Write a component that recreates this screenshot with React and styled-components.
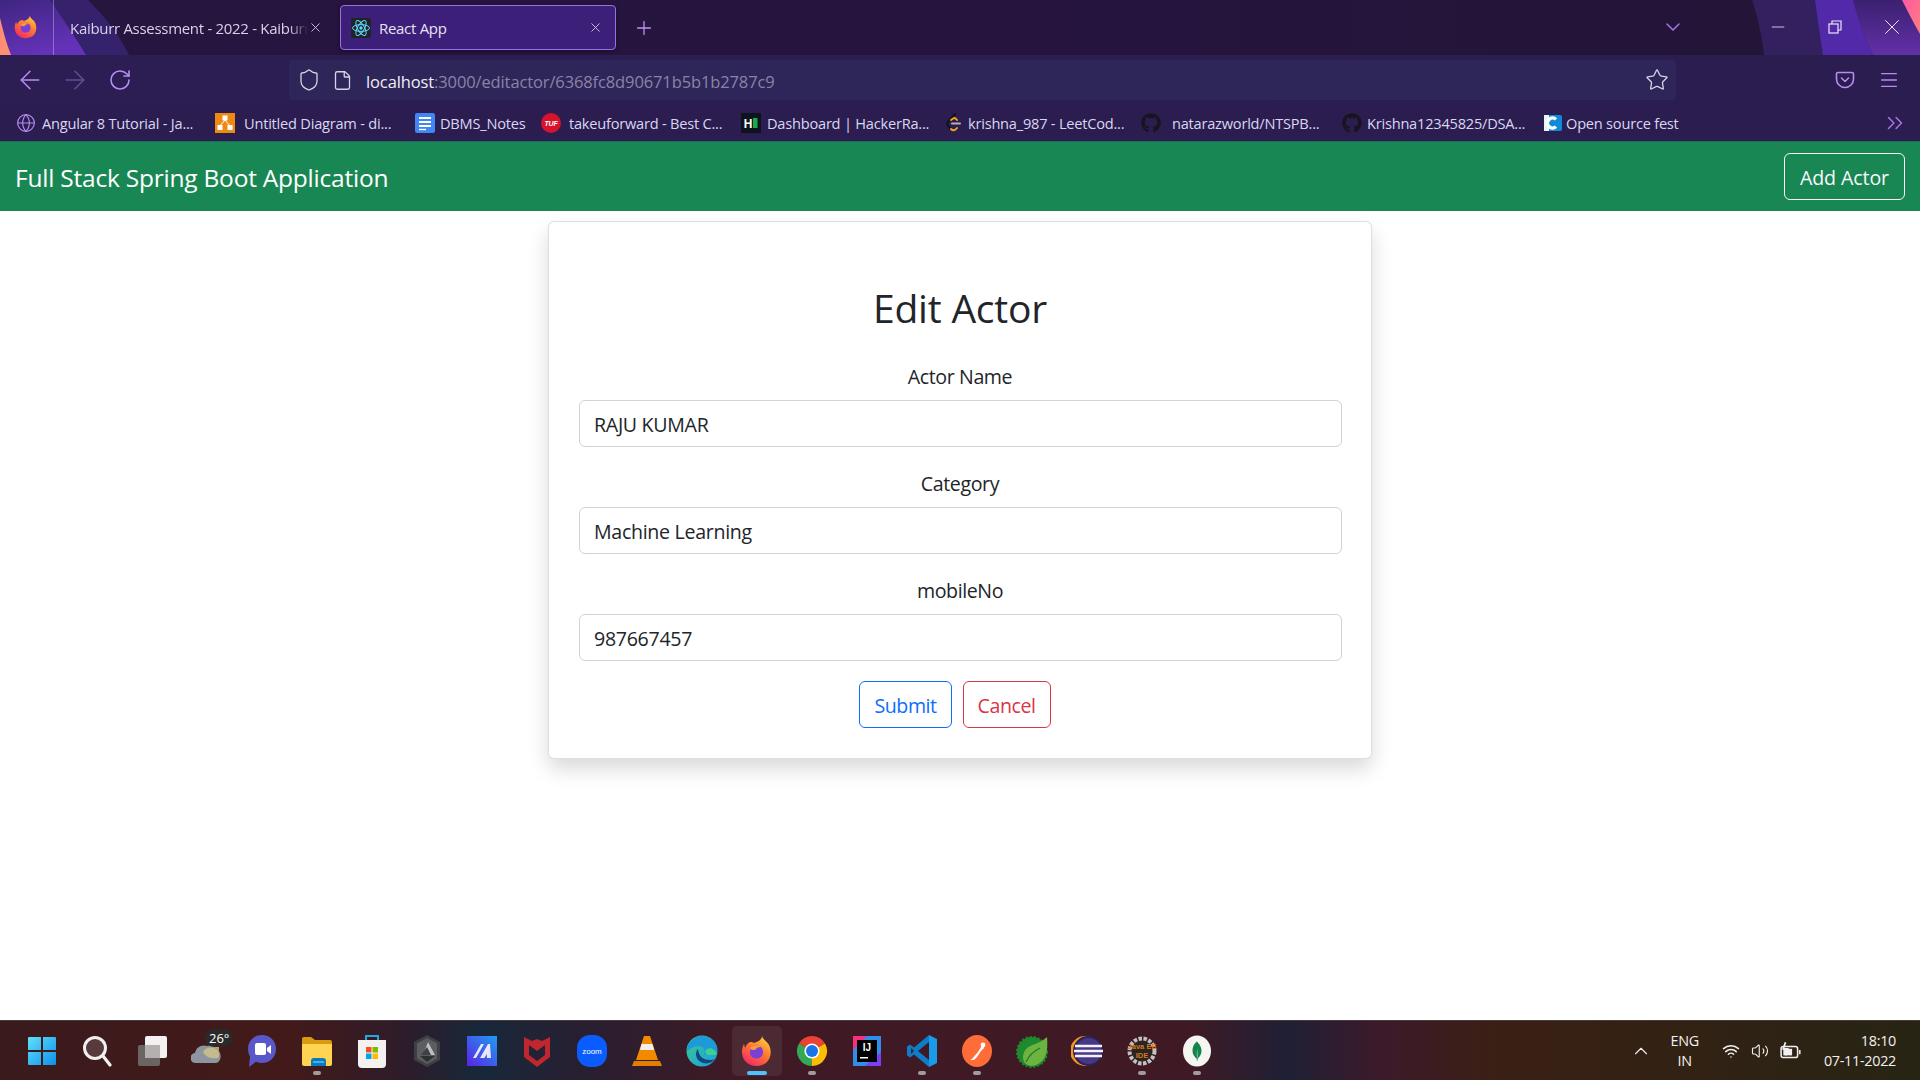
import React from 'react';
import styled, { createGlobalStyle } from 'styled-components';
import {
  ArrowLeft, ArrowRight, RotateCw, Shield, File, Star, ChevronDown, ChevronUp,
  Minus, X, Plus, Menu, ChevronsRight, Globe, Volume2, Wifi,
} from 'lucide-react';
import { FaGithub } from 'react-icons/fa';
import { SiMongodb } from 'react-icons/si';

const UI_FONT = '"Open Sans", "Noto Sans", "Liberation Sans", sans-serif';

const GlobalStyle = createGlobalStyle`
  html, body { margin: 0; padding: 0; height: 100%; background: #fff; }
  body { font-family: ${UI_FONT}; overflow: hidden; }
  #root { height: 100%; }
  * { box-sizing: border-box; }
`;

const Page = styled.div`
  display: flex;
  flex-direction: column;
  height: 1080px;
`;

const TabStrip = styled.div`
  position: relative;
  display: flex;
  align-items: center;
  height: 55px;
  background: linear-gradient(90deg, #25153f 0%, #26143f 50%, #221538 90%);
  color: #e8e2f4;
`;

const Swoop = styled.svg`
  position: absolute;
  left: 0;
  top: 0;
  width: 100%;
  height: 100%;
`;

const BrowserLogo = styled.div`
  position: relative;
  display: flex;
  align-items: center;
  justify-content: center;
  width: 54px;
  height: 55px;
  padding: 0 2px 2px 0;
  border-right: 1px solid rgba(255, 255, 255, 0.3);
`;

const Tab = styled.div`
  position: relative;
  display: flex;
  align-items: center;
  height: 45px;
  font-size: 15px;
  letter-spacing: -0.3px;
  white-space: nowrap;
  ${(p) => p.$active
    ? `width: 276px; margin-left: 10px; padding: 0 12px 0 10px; background: #3b1f78;
       border: 1px solid #9d6fe6; border-radius: 4px; box-shadow: 0 1px 4px rgba(0,0,0,.4);`
    : 'width: 276px; padding: 0 7px 0 16px; color: #d9d2e8;'}
`;

const TabTitle = styled.span`
  flex: 1;
  min-width: 0;
  margin-left: ${(p) => p.$offset || 0}px;
  overflow: hidden;
  ${(p) => p.$fade && 'mask-image: linear-gradient(90deg, #000 92%, transparent);'}
`;

const TabClose = styled.span`
  display: flex;
  color: #d5cfe2;
`;

const NewTab = styled.div`
  position: relative;
  display: flex;
  margin-left: 17px;
  color: #bd93f5;
`;

const TabListButton = styled.div`
  position: relative;
  display: flex;
  margin: 0 64px 2px auto;
  color: #a874e8;
`;

const WindowButton = styled.div`
  position: relative;
  display: flex;
  align-items: center;
  justify-content: center;
  width: 57px;
  height: 55px;
  padding-bottom: 1px;
  color: #ece8f4;
`;

const RestoreIcon = styled.svg`
  width: 14px;
  height: 14px;
`;

const NavBar = styled.div`
  display: flex;
  align-items: center;
  height: 49px;
  padding: 5px 0 4px 7px;
  background: linear-gradient(90deg, #2c1e53 0%, #2b1d4f 100%);
  color: #b98cf2;
`;

const NavButton = styled.div`
  display: flex;
  align-items: center;
  justify-content: center;
  width: 45px;
  opacity: ${(p) => (p.$dim ? 0.42 : 1)};
`;

const UrlBar = styled.div`
  display: flex;
  align-items: center;
  width: 1387px;
  height: 40px;
  margin-left: 147px;
  padding: 0 7px 0 8px;
  background: #2e2659;
  border-radius: 4px;
  color: #d8d2e6;
`;

const UrlIcon = styled.span`
  display: flex;
  margin-right: ${(p) => p.$gap}px;
`;

const UrlHost = styled.span`
  padding-top: 2px;
  font-size: 16.5px;
  letter-spacing: -0.12px;
  color: #f1edf7;
`;

const UrlPath = styled(UrlHost)`
  color: #8b83a7;
`;

const UrlStar = styled.span`
  display: flex;
  margin-left: auto;
`;

const NavRight = styled.div`
  display: flex;
  align-items: center;
  gap: 23px;
  margin-left: 159px;
`;

const BookmarkBar = styled.div`
  display: flex;
  align-items: center;
  height: 37px;
  padding-left: 16px;
  background: #2b1d4f;
  color: #d9d6f2;
  font-size: 14.6px;
  letter-spacing: -0.22px;
  white-space: nowrap;
`;

const Bookmark = styled.div`
  display: flex;
  align-items: center;
  flex: none;
  width: ${(p) => p.$width}px;
`;

const BookmarkIcon = styled.span`
  display: flex;
  align-items: center;
  justify-content: center;
  width: 20px;
  height: 20px;
  margin-right: ${(p) => p.$gap}px;
`;

const OverflowButton = styled.div`
  display: flex;
  margin-left: auto;
  margin-right: 12px;
  color: #a874e8;
`;

const AppBar = styled.header`
  display: flex;
  align-items: center;
  justify-content: space-between;
  height: 70px;
  padding: 0 15px;
  background: #198754;
  border-top: 1px solid #1a6e60;
`;

const Brand = styled.div`
  padding-top: 2px;
  color: #fff;
  font-size: 24.5px;
  letter-spacing: -0.22px;
`;

const OutlineButton = styled.button`
  height: 47px;
  padding: 2px 15px 0;
  background: transparent;
  border: 1px solid ${(p) => p.$color};
  border-radius: 6px;
  color: ${(p) => p.$color};
  font-family: ${UI_FONT};
  font-size: 19.6px;
  letter-spacing: -0.1px;
`;

const FormButton = styled(OutlineButton)`
  padding: 2px 14px 0;
  letter-spacing: -0.45px;
`;

const Main = styled.main`
  flex: 1;
  display: flex;
  justify-content: center;
  padding-top: 10px;
  background: #fff;
`;

const Card = styled.div`
  width: 824px;
  height: 538px;
  padding: 56px 30px 0;
  background: #fff;
  border: 1px solid rgba(0, 0, 0, 0.125);
  border-radius: 6px;
  box-shadow: 0 10px 20px rgba(0, 0, 0, 0.15);
`;

const Heading = styled.h2`
  margin: 0 0 24px;
  color: #212529;
  font-size: 39px;
  font-weight: 400;
  line-height: 59px;
  letter-spacing: -0.2px;
  text-align: center;
`;

const Field = styled.div`
  margin-bottom: 21px;
`;

const Label = styled.label`
  display: block;
  margin-bottom: 8px;
  color: #212529;
  font-size: 19.6px;
  line-height: 31px;
  letter-spacing: -0.4px;
  text-align: center;
`;

const Input = styled.input`
  display: block;
  width: 763px;
  height: 47px;
  padding: 2px 14px 0;
  background: #fff;
  border: 1px solid #ced4da;
  border-radius: 6px;
  color: #212529;
  font-family: ${UI_FONT};
  font-size: 19.6px;
  letter-spacing: -0.3px;
  outline: none;
`;

const Actions = styled.div`
  display: flex;
  justify-content: center;
  gap: 11px;
  margin-top: -1px;
  padding-right: 10px;
`;

const Taskbar = styled.footer`
  display: flex;
  align-items: center;
  height: 60px;
  padding-left: 14px;
  border-top: 1px solid #4a3a40;
  background: linear-gradient(90deg, #3a1a1d 0%, #431a19 15%, #2e1c2a 21%, #17283a 25%, #2a1e30 31%,
    #3f1a25 38%, #3f1a25 62%, #1f2035 67%, #3d1a2a 72%, #3a2014 78%, #272414 100%);
`;

const TaskItem = styled.div`
  position: relative;
  display: flex;
  align-items: center;
  justify-content: center;
  flex: none;
  width: 55px;
  height: 59px;
  &::before {
    content: '';
    display: ${(p) => (p.$active ? 'block' : 'none')};
    position: absolute;
    left: 3px;
    top: 5px;
    width: 50px;
    height: 50px;
    border-radius: 5px;
    background: rgba(255, 255, 255, 0.07);
  }
  &::after {
    content: '';
    display: ${(p) => (p.$active || p.$open ? 'block' : 'none')};
    position: absolute;
    bottom: 5px;
    left: 50%;
    transform: translateX(-50%);
    width: ${(p) => (p.$active ? 20 : 8)}px;
    height: 4px;
    border-radius: 2px;
    background: ${(p) => (p.$active ? '#4cc2ff' : '#a39a9c')};
  }
  & > svg { position: relative; }
`;

const WeatherBadge = styled.span`
  position: absolute;
  left: 26px;
  top: 8px;
  padding: 0 4px;
  border-radius: 9px;
  background: #2a2a2a;
  color: #fff;
  font-size: 13px;
  line-height: 18px;
`;

const Tray = styled.div`
  display: flex;
  align-items: center;
  margin-left: auto;
  padding-right: 24px;
  color: #f2f0ee;
  font-size: 14.4px;
  letter-spacing: -0.3px;
`;

const TrayLang = styled.div`
  margin: 0 23px 0 19px;
  line-height: 20px;
  text-align: center;
`;

const TrayIcons = styled.div`
  display: flex;
  align-items: center;
  gap: 11px;
`;

const Clock = styled.div`
  margin-left: 22px;
  line-height: 20px;
  text-align: right;
`;

const FirefoxIcon = ({ size = 30 }) => (
  <svg width={size} height={size} viewBox="0 0 32 32">
    <defs>
      <linearGradient id={`ff${size}`} x1="0.8" y1="0" x2="0.2" y2="1">
        <stop offset="0" stopColor="#ffd23f" />
        <stop offset="0.45" stopColor="#ff7a2f" />
        <stop offset="1" stopColor="#f0246a" />
      </linearGradient>
    </defs>
    <path d="M21 1c1 4 5 5 7 9 3 6 2 14-3 18-6 4-15 4-20-1C0 22 0 14 3 9l1 4c1-3 3-5 5-6 2 0 3 0 4 1 3-1 8-3 8-7z" fill={`url(#ff${size})`} />
    <circle cx="15.5" cy="17" r="6.6" fill="#7a3fd6" />
    <path d="M9 13c3-3 8-3 11-1-3 0-5 1-6 3-2 0-4 0-5-2z" fill="#ff9a3a" />
  </svg>
);

const ReactIcon = () => (
  <svg width="20" height="20" viewBox="0 0 20 20">
    <rect width="20" height="20" rx="2" fill="#20232a" />
    <g fill="none" stroke="#61dafb" strokeWidth="1">
      <ellipse cx="10" cy="10" rx="8.5" ry="3.4" />
      <ellipse cx="10" cy="10" rx="8.5" ry="3.4" transform="rotate(60 10 10)" />
      <ellipse cx="10" cy="10" rx="8.5" ry="3.4" transform="rotate(120 10 10)" />
    </g>
    <circle cx="10" cy="10" r="1.7" fill="#61dafb" />
  </svg>
);

const PocketIcon = () => (
  <svg width="20" height="20" viewBox="0 0 20 20" fill="none" stroke="currentColor" strokeWidth="1.6" strokeLinecap="round" strokeLinejoin="round">
    <path d="M3 2.5h14a1.5 1.5 0 0 1 1.5 1.5v5a8.5 8.5 0 0 1-17 0V4A1.5 1.5 0 0 1 3 2.5z" />
    <path d="M6.5 8l3.5 3.5L13.500 8" />
  </svg>
);

const DrawioIcon = () => (
  <svg width="20" height="20" viewBox="0 0 20 20">
    <rect width="20" height="20" fill="#ee8a12" />
    <path d="M10 7l-5 6M10 7l5 6" stroke="#fff" strokeWidth="1" />
    <rect x="7.5" y="2.5" width="5" height="5" fill="#fff" />
    <rect x="2.5" y="12" width="5" height="5" fill="#fff" />
    <rect x="12.5" y="12" width="5" height="5" fill="#fff" />
  </svg>
);

const DocsIcon = () => (
  <svg width="20" height="20" viewBox="0 0 20 20">
    <rect width="20" height="20" rx="2" fill="#4285f4" />
    <path d="M4 5h12M4 9h12M4 13h12" stroke="#fff" strokeWidth="2" />
    <path d="M4 16.5h7" stroke="#fff" strokeWidth="1.4" />
  </svg>
);

const TufIcon = () => (
  <svg width="20" height="20" viewBox="0 0 20 20">
    <circle cx="10" cy="10" r="10" fill="#d7132c" />
    <text x="10" y="12.5" textAnchor="middle" fontSize="7" fontWeight="800" fontStyle="italic" fill="#fff" fontFamily="Liberation Sans">TUF</text>
  </svg>
);

const HackerRankIcon = () => (
  <svg width="20" height="20" viewBox="0 0 20 20">
    <rect width="20" height="20" fill="#0e141e" />
    <text x="7" y="14.5" textAnchor="middle" fontSize="12" fontWeight="700" fill="#fff" fontFamily="Liberation Sans">H</text>
    <rect x="12" y="5" width="4.5" height="10" fill="#1ba94c" />
  </svg>
);

const LeetCodeIcon = () => (
  <svg width="20" height="20" viewBox="0 0 20 20" fill="none" strokeWidth="2" strokeLinecap="round">
    <path d="M12 1L5 9Q3.500 11 5 13L8 16" stroke="#14101c" />
    <path d="M8 7L11 5Q12 4.500 14 7" stroke="#f0a41c" />
    <path d="M8 16Q11 19 14 15" stroke="#f0a41c" />
    <path d="M9 10.500H17" stroke="#b3b1b8" />
  </svg>
);

const FestIcon = () => (
  <svg width="18" height="16" viewBox="0 0 18 16">
    <rect width="18" height="16" rx="2" fill="#0d8bd9" />
    <path d="M12 4.4A5 5 0 1 0 12 11.6" fill="none" stroke="#fff" strokeWidth="3.4" />
    <rect x="0" y="0" width="5" height="16" fill="#fff" opacity="0.9" />
  </svg>
);

const WindowsIcon = () => (
  <svg width="30" height="30" viewBox="0 0 30 30">
    <defs>
      <linearGradient id="win" x1="0" y1="0" x2="1" y2="1">
        <stop offset="0" stopColor="#5fe0fb" />
        <stop offset="1" stopColor="#0f8fe8" />
      </linearGradient>
    </defs>
    <path d="M1 2a1 1 0 0 1 1-1h12v13H1zM16 1h12a1 1 0 0 1 1 1v12H16zM1 16h13v13H2a1 1 0 0 1-1-1zM16 16h13v12a1 1 0 0 1-1 1H16z" fill="url(#win)" />
  </svg>
);

const SearchIcon = () => (
  <svg width="30" height="32" viewBox="0 0 30 32">
    <circle cx="13" cy="13" r="10.500" fill="rgba(255,255,255,.14)" stroke="#f2efef" strokeWidth="3" />
    <path d="M21 21l7 9" stroke="#f2efef" strokeWidth="3.200" strokeLinecap="round" />
  </svg>
);

const TaskViewIcon = () => (
  <svg width="30" height="32" viewBox="0 0 30 32">
    <rect x="1" y="10" width="22" height="21" rx="2" fill="#6a6463" />
    <rect x="8" y="1" width="22" height="22" rx="2" fill="#f3f1f1" />
    <rect x="8" y="10" width="15" height="13" fill="#b5b0af" />
  </svg>
);

const WeatherIcon = () => (
  <svg width="32" height="32" viewBox="0 0 32 32">
    <rect x="20" y="10" width="8" height="8" fill="#e9a22c" />
    <path d="M5 28a5 5 0 0 1-1-10c1-6 7-9 12-7 4-1 11 1 13 7 2 5-1 10-4 10z" fill="#8d96a0" />
    <path d="M12 17c2-4 8-6 13-3 3 2 4 6 2 9-5 1-12 0-15-6z" fill="#c4bb8c" />
  </svg>
);

const MeetIcon = () => (
  <svg width="30" height="34" viewBox="0 0 30 34">
    <path d="M15 1c8 0 14 6 14 14s-6 14-14 14c-2 0-4-.5-6-1.300L2 33l1-10C2 21 1 18 1 15 1 7 7 1 15 1z" fill="#5a57c8" />
    <rect x="8" y="9" width="11" height="12" rx="2" fill="#fff" />
    <path d="M20 14l4-3v9l-4-3z" fill="#fff" />
  </svg>
);

const FolderIcon = () => (
  <svg width="32" height="32" viewBox="0 0 32 32">
    <path d="M1 4a2 2 0 0 1 2-2h7l4 3h15a2 2 0 0 1 2 2v3H1z" fill="#d99a10" />
    <path d="M1 9h30v20a2 2 0 0 1-2 2H3a2 2 0 0 1-2-2z" fill="#ffd453" />
    <path d="M10 31v-5a3 3 0 0 1 3-3h9a3 3 0 0 1 3 3v5z" fill="#1276bd" />
    <rect x="12" y="26" width="11" height="2" fill="#38b6f1" />
  </svg>
);

const StoreIcon = () => (
  <svg width="30" height="34" viewBox="0 0 30 34">
    <path d="M9 6V2h12v4" fill="none" stroke="#22a7e0" strokeWidth="2" />
    <path d="M1 6h28v24a4 4 0 0 1-4 4H5a4 4 0 0 1-4-4z" fill="#f4f2f0" />
    <rect x="9" y="13" width="5.5" height="5.5" fill="#f25022" />
    <rect x="15.5" y="13" width="5.5" height="5.5" fill="#7fba00" />
    <rect x="9" y="19.5" width="5.5" height="5.5" fill="#00a4ef" />
    <rect x="15.5" y="19.5" width="5.5" height="5.5" fill="#ffb900" />
  </svg>
);

const HexIcon = () => (
  <svg width="28" height="32" viewBox="0 0 28 32">
    <path d="M14 0l13 7v18l-13 7-13-7V7z" fill="#3f4044" />
    <path d="M14 3l10 5.500v15L14 29 4 23.500v-15z" fill="#5c5d61" />
    <path d="M15 7l7 13H10z" fill="#bfc0c3" />
    <path d="M14 12l4 8H8z" fill="#3f4044" />
    <path d="M7 21h15l-8 6z" fill="#2f3033" />
  </svg>
);

const MongoLabIcon = () => (
  <svg width="30" height="30" viewBox="0 0 30 30">
    <defs>
      <linearGradient id="ml" x1="0" y1="1" x2="1" y2="0">
        <stop offset="0" stopColor="#5a22e6" />
        <stop offset="1" stopColor="#1f9df0" />
      </linearGradient>
    </defs>
    <rect width="30" height="30" fill="url(#ml)" />
    <path d="M6 22L14 8h3L9 22zM13 22l8-14h2l1 14h-4l-.3-4-2.200 4z" fill="#e6e8fb" />
  </svg>
);

const McAfeeIcon = () => (
  <svg width="28" height="32" viewBox="0 0 28 32">
    <path d="M1 2l8 4 5-2 5 2 8-4v20L14 32 1 22zM6 10v10l8 6 8-6V10l-8 6z" fill="#c0262d" />
  </svg>
);

const ZoomIcon = () => (
  <svg width="30" height="32" viewBox="0 0 30 32">
    <rect width="30" height="32" rx="13" fill="#0b5cff" />
    <text x="15" y="19" textAnchor="middle" fontSize="8" fill="#fff" fontFamily="Liberation Sans">zoom</text>
  </svg>
);

const VlcIcon = () => (
  <svg width="30" height="32" viewBox="0 0 30 32">
    <path d="M12 1h6l8 24H4z" fill="#f28a00" />
    <path d="M9.5 9h11l1.600 6H8z" fill="#f2f0ee" />
    <path d="M2 26h26l2 5H0z" fill="#e47e00" />
  </svg>
);

const EdgeIcon = () => (
  <svg width="32" height="32" viewBox="0 0 32 32">
    <defs>
      <linearGradient id="edge" x1="0" y1="0" x2="1" y2="1">
        <stop offset="0" stopColor="#3ccb8c" />
        <stop offset="1" stopColor="#1b9de2" />
      </linearGradient>
    </defs>
    <circle cx="16" cy="16" r="15.500" fill="url(#edge)" />
    <path d="M1 16C1 7 9 1 16 1c8 0 15 6 15 13 0 4-3 6-6 6h-7c2-5-1-9-5-9-5 0-9 3-12 5z" fill="#1d9ad9" />
    <path d="M12 14c-3 3-3 10 3 13 5 3 11 1 14-3-5 2-16 2-17-10z" fill="#12467f" />
    <path d="M19 17c1-4 6-5 9-2 3 2 3 4 1 5h-8z" fill="#3fd08f" />
  </svg>
);

const ChromeIcon = () => (
  <svg width="32" height="32" viewBox="0 0 32 32">
    <path d="M16 16L3 8.500A15 15 0 0 1 29 8.500z" fill="#ea4335" />
    <path d="M16 16L29 8.500A15 15 0 0 1 16 31z" fill="#fbbc04" />
    <path d="M16 16V31A15 15 0 0 1 3 8.500z" fill="#34a853" />
    <circle cx="16" cy="16" r="7.600" fill="#fff" />
    <circle cx="16" cy="16" r="6" fill="#1a73e8" />
  </svg>
);

const IdeaIcon = () => (
  <svg width="28" height="30" viewBox="0 0 28 30">
    <rect width="28" height="30" fill="#2f8fe8" />
    <path d="M0 0h14L0 14z" fill="#f6317c" />
    <path d="M28 30H12l16-14z" fill="#7b3ff2" />
    <rect x="4" y="4" width="20" height="22" fill="#000" />
    <text x="14" y="15" textAnchor="middle" fontSize="10" fontWeight="700" fill="#fff" fontFamily="Liberation Sans">IJ</text>
    <rect x="7" y="21" width="8" height="1.500" fill="#fff" />
  </svg>
);

const VsCodeIcon = () => (
  <svg width="30" height="32" viewBox="0 0 30 32">
    <path d="M22 0l8 4v24l-8 4z" fill="#1a9be8" />
    <path d="M22 0v7L11 16l11 9v7L7 19.500l-4 3-3-2v-9l3-2 4 3z" fill="#0e7cc7" />
    <path d="M4 13l3 3-3 3z" fill="#3f2024" />
  </svg>
);

const PostmanIcon = () => (
  <svg width="30" height="32" viewBox="0 0 30 32">
    <ellipse cx="15" cy="16" rx="15" ry="16" fill="#ff6c37" />
    <path d="M8 25c3-1 5-5 8-8l3-5 2-1 1 2-3 3-4 6-3 3z" fill="#fff" />
    <circle cx="21" cy="10" r="2.400" fill="#fff" />
  </svg>
);

const SpringIcon = () => (
  <svg width="32" height="34" viewBox="0 0 32 34">
    <circle cx="16" cy="18" r="15" fill="#1f8a2d" strokeDasharray="2 2" stroke="#1f8a2d" strokeWidth="2" />
    <path d="M31 3c1 10 0 20-6 25-4 4-11 5-15 2C6 27 6 20 10 15c5-5 14-5 21-12z" fill="#6cb33f" />
    <path d="M10 28c3-7 8-11 14-14" stroke="#1f7a2d" strokeWidth="1.200" fill="none" />
  </svg>
);

const EclipseIcon = () => (
  <svg width="32" height="32" viewBox="0 0 32 32">
    <circle cx="14" cy="16" r="15" fill="#f7941e" />
    <circle cx="17" cy="16" r="15" fill="#2c2255" />
    <circle cx="17.500" cy="16" r="13" fill="#473788" />
    <path d="M4 11h27M3 16h29M4 21h27" stroke="#f4f2f8" strokeWidth="2.600" />
  </svg>
);

const JavaEeIcon = () => (
  <svg width="30" height="32" viewBox="0 0 30 32">
    <circle cx="15" cy="16" r="12.500" fill="#2a2523" stroke="#c5c1bf" strokeWidth="4" strokeDasharray="3.500 1.500" />
    <text x="15" y="14" textAnchor="middle" fontSize="7.500" fontWeight="700" fill="#d9781c" fontFamily="Liberation Sans">Java EE</text>
    <text x="15" y="23" textAnchor="middle" fontSize="7.500" fontWeight="700" fill="#d9781c" fontFamily="Liberation Sans">IDE</text>
  </svg>
);

const MongoIcon = () => (
  <svg width="30" height="32" viewBox="0 0 30 32">
    <ellipse cx="15" cy="16" rx="14" ry="15.500" fill="#f5f5f2" />
    <svg x="5" y="5" width="20" height="22" viewBox="0 0 24 24"><SiMongodb color="#11854c" size={24} /></svg>
  </svg>
);

const BatteryIcon = () => (
  <svg width="22" height="20" viewBox="0 0 20 18" fill="none" stroke="#f2f0ee" strokeWidth="1.400">
    <rect x="1" y="5" width="15" height="10" rx="2" />
    <path d="M18 8v4" />
    <path d="M5 1L3 7h4l-2 6" strokeWidth="1.600" />
    <rect x="3" y="7" width="8" height="6" fill="#f2f0ee" stroke="none" />
  </svg>
);

const bookmarks = [
  { title: 'Angular 8 Tutorial - Ja...', width: 199, gap: 6, icon: <Globe size={22} color="#b58cf0" strokeWidth={1.4} /> },
  { title: 'Untitled Diagram - di...', width: 200, gap: 9, icon: <DrawioIcon /> },
  { title: 'DBMS_Notes', width: 126, gap: 5, icon: <DocsIcon /> },
  { title: 'takeuforward - Best C...', width: 200, gap: 8, icon: <TufIcon /> },
  { title: 'Dashboard | HackerRa...', width: 202, gap: 6, icon: <HackerRankIcon /> },
  { title: 'krishna_987 - LeetCod...', width: 198, gap: 5, icon: <LeetCodeIcon /> },
  { title: 'natarazworld/NTSPB...', width: 201, gap: 11, icon: <FaGithub size={20} color="#17141f" /> },
  { title: 'Krishna12345825/DSA...', width: 201, gap: 5, icon: <FaGithub size={20} color="#17141f" /> },
  { title: 'Open source fest', width: 140, gap: 3, icon: <FestIcon /> },
];

const taskItems = [
  { id: 'start', icon: <WindowsIcon /> },
  { id: 'search', icon: <SearchIcon /> },
  { id: 'view', icon: <TaskViewIcon /> },
  { id: 'weather', icon: <WeatherIcon />, badge: '26°' },
  { id: 'meet', icon: <MeetIcon /> },
  { id: 'folder', icon: <FolderIcon />, open: true },
  { id: 'store', icon: <StoreIcon /> },
  { id: 'hex', icon: <HexIcon /> },
  { id: 'lab', icon: <MongoLabIcon /> },
  { id: 'mcafee', icon: <McAfeeIcon /> },
  { id: 'zoom', icon: <ZoomIcon /> },
  { id: 'vlc', icon: <VlcIcon /> },
  { id: 'edge', icon: <EdgeIcon /> },
  { id: 'firefox', icon: <FirefoxIcon size={32} />, active: true },
  { id: 'chrome', icon: <ChromeIcon />, open: true },
  { id: 'idea', icon: <IdeaIcon /> },
  { id: 'vscode', icon: <VsCodeIcon />, open: true },
  { id: 'postman', icon: <PostmanIcon />, open: true },
  { id: 'spring', icon: <SpringIcon /> },
  { id: 'eclipse', icon: <EclipseIcon /> },
  { id: 'javaee', icon: <JavaEeIcon />, open: true },
  { id: 'mongo', icon: <MongoIcon />, open: true },
];

const fields = [
  { label: 'Actor Name', value: 'RAJU KUMAR' },
  { label: 'Category', value: 'Machine Learning' },
  { label: 'mobileNo', value: '987667457' },
];

export default function App() {
  return (
    <Page>
      <GlobalStyle />
      <TabStrip>
        <Swoop viewBox="0 0 1920 55" preserveAspectRatio="none">
          <defs>
            <linearGradient id="swoopLeft" x1="0" y1="0" x2="0.4" y2="1">
              <stop offset="0" stopColor="#3f2580" />
              <stop offset="1" stopColor="#6432b8" />
            </linearGradient>
            <linearGradient id="swoopRight" x1="0" y1="0" x2="0" y2="1">
              <stop offset="0" stopColor="#3a2170" />
              <stop offset="1" stopColor="#6330a8" />
            </linearGradient>
            <linearGradient id="swoopPink" x1="0" y1="0" x2="1" y2="1">
              <stop offset="0" stopColor="#ff5aa5" />
              <stop offset="1" stopColor="#ff7d7d" />
            </linearGradient>
          </defs>
          <path d="M0 0H88C106 18 120 36 129 55H0z" fill="#36216c" />
          <path d="M0 0H50C62 18 76 38 86 55H0z" fill="url(#swoopLeft)" />
          <path d="M0 18C3 30 6 43 11 55H0z" fill="#ff8f70" />
          <path d="M1752 0H1920V55H1764C1762 35 1757 15 1752 0z" fill="#33205f" />
          <path d="M1853 0H1920V55H1873C1864 38 1858 18 1853 0z" fill="url(#swoopRight)" />
          <path d="M1815 0H1853C1858 18 1864 38 1873 55H1823C1820 35 1817 15 1815 0z" fill="#5229a8" />
          <path d="M1902 0H1920V34C1913 22 1907 10 1902 0z" fill="url(#swoopPink)" />
        </Swoop>
        <BrowserLogo><FirefoxIcon size={24} /></BrowserLogo>
        <Tab>
          <TabTitle $fade>Kaiburr Assessment - 2022 - Kaiburr</TabTitle>
          <TabClose><X size={15} strokeWidth={1.4} /></TabClose>
        </Tab>
        <Tab $active>
          <ReactIcon />
          <TabTitle $offset={8}>React App</TabTitle>
          <TabClose><X size={15} strokeWidth={1.4} /></TabClose>
        </Tab>
        <NewTab><Plus size={22} strokeWidth={1.4} /></NewTab>
        <TabListButton><ChevronDown size={24} strokeWidth={1.5} /></TabListButton>
        <WindowButton><Minus size={20} strokeWidth={1} /></WindowButton>
        <WindowButton>
          <RestoreIcon viewBox="0 0 14 14" fill="none" stroke="currentColor" strokeWidth="1.2">
            <rect x="1" y="4" width="9" height="9" />
            <path d="M4 4V1h9v9h-3" />
          </RestoreIcon>
        </WindowButton>
        <WindowButton><X size={26} strokeWidth={0.9} /></WindowButton>
      </TabStrip>

      <NavBar>
        <NavButton><ArrowLeft size={30} strokeWidth={1.2} /></NavButton>
        <NavButton $dim><ArrowRight size={30} strokeWidth={1.2} /></NavButton>
        <NavButton><RotateCw size={24} strokeWidth={1.6} /></NavButton>
        <UrlBar>
          <UrlIcon $gap={11}><Shield size={24} strokeWidth={1.3} /></UrlIcon>
          <UrlIcon $gap={13}><File size={21} strokeWidth={1.5} /></UrlIcon>
          <UrlHost>localhost</UrlHost>
          <UrlPath>:3000/editactor/6368fc8d90671b5b1b2787c9</UrlPath>
          <UrlStar><Star size={24} strokeWidth={1.3} /></UrlStar>
        </UrlBar>
        <NavRight>
          <PocketIcon />
          <Menu size={22} strokeWidth={1.5} />
        </NavRight>
      </NavBar>

      <BookmarkBar>
        {bookmarks.map((b) => (
          <Bookmark key={b.title} $width={b.width}>
            <BookmarkIcon $gap={b.gap}>{b.icon}</BookmarkIcon>
            {b.title}
          </Bookmark>
        ))}
        <OverflowButton><ChevronsRight size={26} strokeWidth={1.4} /></OverflowButton>
      </BookmarkBar>

      <AppBar>
        <Brand>Full Stack Spring Boot Application</Brand>
        <OutlineButton $color="#f8f9fa">Add Actor</OutlineButton>
      </AppBar>

      <Main>
        <Card>
          <Heading>Edit Actor</Heading>
          {fields.map((f) => (
            <Field key={f.label}>
              <Label>{f.label}</Label>
              <Input defaultValue={f.value} />
            </Field>
          ))}
          <Actions>
            <FormButton $color="#0d6efd">Submit</FormButton>
            <FormButton $color="#dc3545">Cancel</FormButton>
          </Actions>
        </Card>
      </Main>

      <Taskbar>
        {taskItems.map((t) => (
          <TaskItem key={t.id} $active={t.active} $open={t.open}>
            {t.icon}
            {t.badge && <WeatherBadge>{t.badge}</WeatherBadge>}
          </TaskItem>
        ))}
        <Tray>
          <ChevronUp size={22} strokeWidth={1.2} />
          <TrayLang>ENG<br />IN</TrayLang>
          <TrayIcons>
            <Wifi size={18} strokeWidth={2} />
            <Volume2 size={18} strokeWidth={1.5} />
            <BatteryIcon />
          </TrayIcons>
          <Clock>18:10<br />07-11-2022</Clock>
        </Tray>
      </Taskbar>
    </Page>
  );
}
